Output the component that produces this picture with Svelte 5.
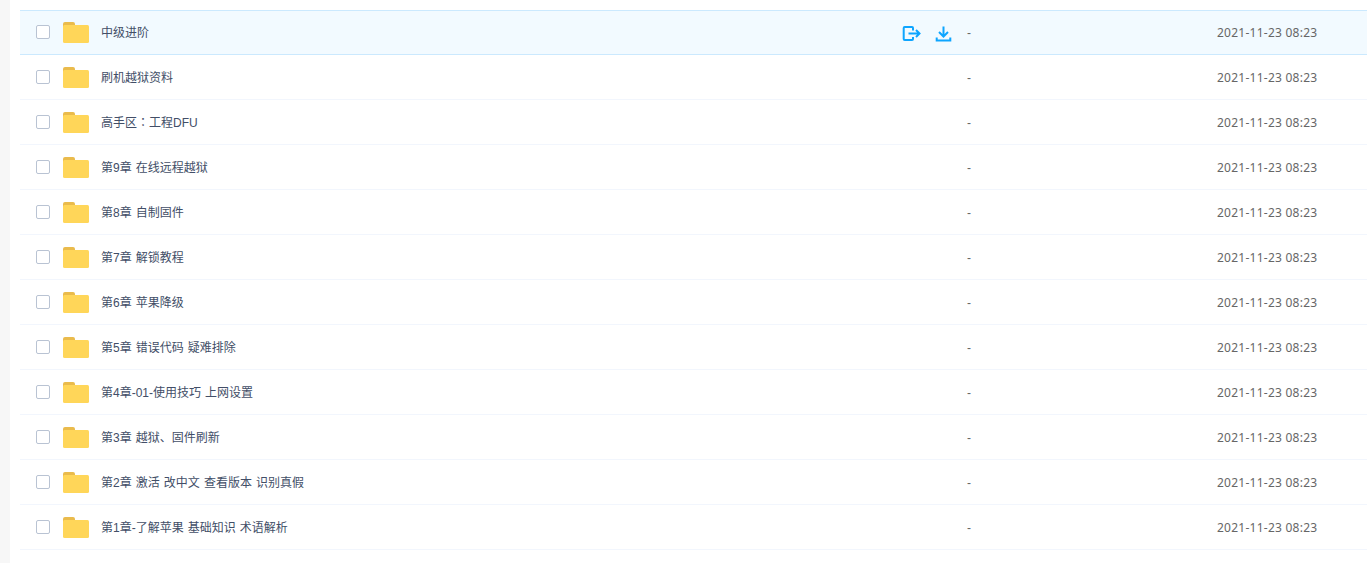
<script>
	const rows = [
		'中级进阶',
		'刷机越狱资料',
		'高手区：工程DFU',
		'第9章 在线远程越狱',
		'第8章 自制固件',
		'第7章 解锁教程',
		'第6章 苹果降级',
		'第5章 错误代码 疑难排除',
		'第4章-01-使用技巧 上网设置',
		'第3章 越狱、固件刷新',
		'第2章 激活 改中文 查看版本 识别真假',
		'第1章-了解苹果 基础知识 术语解析'
	];
</script>

<div class="page">
	<div class="list">
		{#each rows as name, i}
			<div class="row" class:active={i === 0}>
				<span class="check"></span>
				<svg class="folder" width="26" height="21" viewBox="0 0 26 21">
					<path d="M0 2a2 2 0 0 1 2-2h8a2 2 0 0 1 2 2v1H2v3H0z" fill="#eabb4c" />
					<rect x="0" y="3" width="26" height="18" rx="1.5" fill="#ffd659" />
				</svg>
				<span class="name" class:tc={name.includes('：')}>{name}</span>
				{#if i === 0}
					<span class="actions">
						<svg width="20" height="20" viewBox="0 0 20 20" fill="none" stroke="#0ea5ff" stroke-width="2">
							<path d="M12 6.500V4a1 1 0 0 0-1-1H3.700a1 1 0 0 0-1 1v11a1 1 0 0 0 1 1H11a1 1 0 0 0 1-1v-2" />
							<path d="M7.500 9.500H18.500M15 6 18.500 9.500 15 13" />
						</svg>
						<svg width="20" height="20" viewBox="0 0 20 20" fill="none" stroke="#0ea5ff" stroke-width="2">
							<path d="M10.500 2.500v10M6 8l4.500 4.500L15 8" />
							<path d="M3.700 13.500v3h13.600v-3" />
						</svg>
					</span>
				{/if}
				<span class="size">-</span>
				<span class="date">2021-11-23 08:23</span>
			</div>
		{/each}
	</div>
</div>

<style>
	:global(body) {
		margin: 0;
		background: #fff;
	}

	.page {
		height: 563px;
		overflow: hidden;
		box-sizing: border-box;
		border-left: 10px solid #f7f7f7;
		padding: 10px 0 0 10px;
		font-family: "Liberation Sans", "Noto Sans CJK SC", sans-serif;
		font-size: 12px;
		color: #666;
	}

	.row {
		display: flex;
		align-items: center;
		height: 44px;
		border-bottom: 1px solid #f2f6fd;
		padding-left: 16px;
		position: relative;
	}

	.row.active {
		background: #f2faff;
		border-bottom-color: #cbe9fe;
		box-shadow: inset 0 1px 0 #cbe9fe;
	}

	.check {
		width: 12px;
		height: 12px;
		border: 1px solid #b9c3d3;
		border-radius: 2px;
		background: #fff;
		flex: none;
	}

	.folder {
		flex: none;
		margin-left: 13px;
	}

	.name {
		margin-left: 12px;
		padding-bottom: 2px;
		color: #424e67;
		flex: 1;
		white-space: nowrap;
		word-spacing: 0.75px;
	}

	.name.tc {
		font-family: "Liberation Sans", "Noto Sans CJK TC", sans-serif;
	}

	.actions {
		position: absolute;
		left: 881px;
		top: 14px;
		display: flex;
		gap: 12px;
	}

	.size {
		width: 250px;
		flex: none;
		padding-top: 2px;
	}

	.date {
		width: 150px;
		flex: none;
		font-family: "Noto Sans", sans-serif;
		letter-spacing: 0.25px;
		color: #666;
	}
</style>
